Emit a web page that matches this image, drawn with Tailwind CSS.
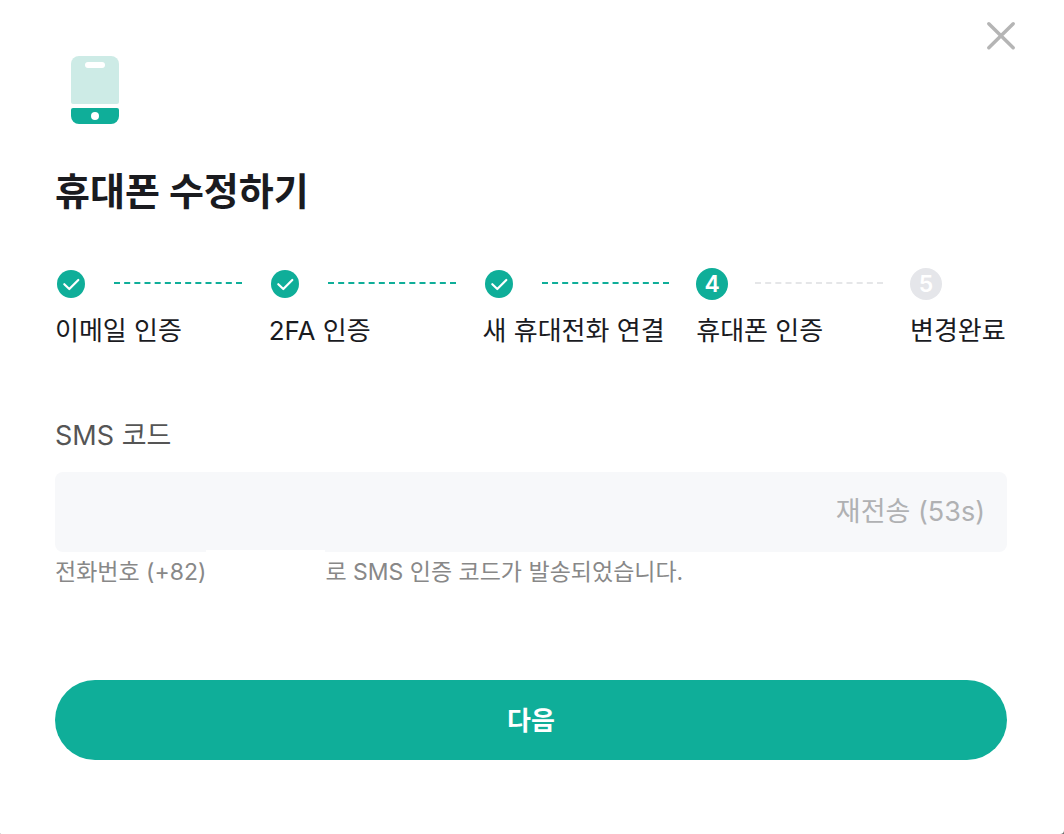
<!DOCTYPE html>
<html lang="ko">
<head>
    <meta charset="UTF-8" />
    <meta name="viewport" content="width=device-width, initial-scale=1.0"/>
    <title>휴대폰 수정하기</title>
    <!-- Tailwind CSS -->
    <script src="https://cdn.jsdelivr.net/npm/@tailwindcss/browser@4"></script>
</head>
<body class="bg-[#6b6b6b] font-[Inter,'Noto_Sans_CJK_KR',sans-serif] text-[#1a1b1f]">

<main class="relative min-h-screen bg-white rounded-bl-[1px] rounded-br-[4px] pl-[55px] pr-[57px] pt-[56px] pb-[74px]">
    <button type="button" aria-label="닫기" class="absolute top-[20px] right-[47px]">
        <svg class="size-8" viewBox="0 0 32 32" fill="none" stroke="#b5b5b5" stroke-width="3.500" stroke-linecap="round">
            <path d="M3.800 3.800L28.200 27.700M28.200 3.800L3.800 27.700"/>
        </svg>
    </button>

    <!-- Phone icon -->
    <svg class="ml-4 w-12 h-[68px]" viewBox="0 0 48 68">
        <path fill="#cdebe6" d="M8 0H40A8 8 0 0 1 48 8V46A2 2 0 0 1 46 48H2A2 2 0 0 1 0 46V8A8 8 0 0 1 8 0Z"/>
        <rect x="14" y="6" width="20" height="6" rx="3" fill="#fff"/>
        <path fill="#0fae99" d="M2 52H46A2 2 0 0 1 48 54V60A8 8 0 0 1 40 68H8A8 8 0 0 1 0 60V54A2 2 0 0 1 2 52Z"/>
        <circle cx="24" cy="60" r="4" fill="#fff"/>
    </svg>

    <h1 class="mt-[39px] text-[38px] leading-[56px] font-bold">휴대폰 수정하기</h1>

    <!-- Steps -->
    <ol class="mt-[49px] flex text-[26px] leading-9 whitespace-nowrap">
        <li class="flex-1 min-w-0">
            <div class="flex items-center">
                <svg class="size-8 shrink-0" viewBox="0 0 32 32" fill="none">
                    <circle cx="16" cy="16" r="14" fill="#0fae99"/>
                    <path d="M9.300 16.200L14.300 21L23.300 12" stroke="#fff" stroke-width="2.200" stroke-linecap="round" stroke-linejoin="round"/>
                </svg>
                <span class="flex-1 mx-[27px] mb-0.5 border-t-2 border-dashed border-[#0fae99]"></span>
            </div>
            <p class="mt-[13px]">이메일 인증</p>
        </li>
        <li class="flex-1 min-w-0">
            <div class="flex items-center">
                <svg class="size-8 shrink-0" viewBox="0 0 32 32" fill="none">
                    <circle cx="16" cy="16" r="14" fill="#0fae99"/>
                    <path d="M9.300 16.200L14.300 21L23.300 12" stroke="#fff" stroke-width="2.200" stroke-linecap="round" stroke-linejoin="round"/>
                </svg>
                <span class="flex-1 mx-[27px] mb-0.5 border-t-2 border-dashed border-[#0fae99]"></span>
            </div>
            <p class="mt-[13px]">2FA 인증</p>
        </li>
        <li class="flex-1 min-w-0">
            <div class="flex items-center">
                <svg class="size-8 shrink-0" viewBox="0 0 32 32" fill="none">
                    <circle cx="16" cy="16" r="14" fill="#0fae99"/>
                    <path d="M9.300 16.200L14.300 21L23.300 12" stroke="#fff" stroke-width="2.200" stroke-linecap="round" stroke-linejoin="round"/>
                </svg>
                <span class="flex-1 mx-[27px] mb-0.5 border-t-2 border-dashed border-[#0fae99]"></span>
            </div>
            <p class="mt-[13px]">새 휴대전화 연결</p>
        </li>
        <li class="flex-1 min-w-0" aria-current="step">
            <div class="flex items-center">
                <span class="flex size-8 shrink-0 items-center justify-center rounded-full bg-[#0fae99] text-[23px] leading-8 font-semibold text-white">4</span>
                <span class="flex-1 mx-[27px] mb-0.5 border-t-2 border-dashed border-[#e5e6e8]"></span>
            </div>
            <p class="mt-[13px]">휴대폰 인증</p>
        </li>
        <li class="w-[97px]">
            <span class="flex size-8 items-center justify-center rounded-full bg-[#e5e6ea] text-[23px] leading-8 font-semibold text-white">5</span>
            <p class="mt-[13px]">변경완료</p>
        </li>
    </ol>

    <!-- SMS code -->
    <form>
        <label for="smsCode" class="mt-[67px] block text-[27px] leading-10 text-[#555]">SMS 코드</label>
        <div class="mt-4 flex h-20 items-center rounded-lg bg-[#f7f8fa] px-[22px] text-[27px]">
            <input id="smsCode" type="text" inputmode="numeric" class="h-full min-w-0 flex-1 bg-transparent outline-none"/>
            <button type="button" disabled class="text-[#b0b1b3]">재전송 (53s)</button>
        </div>
        <p class="flex text-[23px] leading-10 text-[#888]">
            <span>전화번호 (+82)</span>
            <span class="-mt-0.5 w-[119px] bg-white"></span>
            <span>로 SMS 인증 코드가 발송되었습니다.</span>
        </p>
        <button type="submit" class="mt-[88px] h-20 w-full rounded-full bg-[#0fae99] text-[26px] font-bold text-white">다음</button>
    </form>
</main>

</body>
</html>
